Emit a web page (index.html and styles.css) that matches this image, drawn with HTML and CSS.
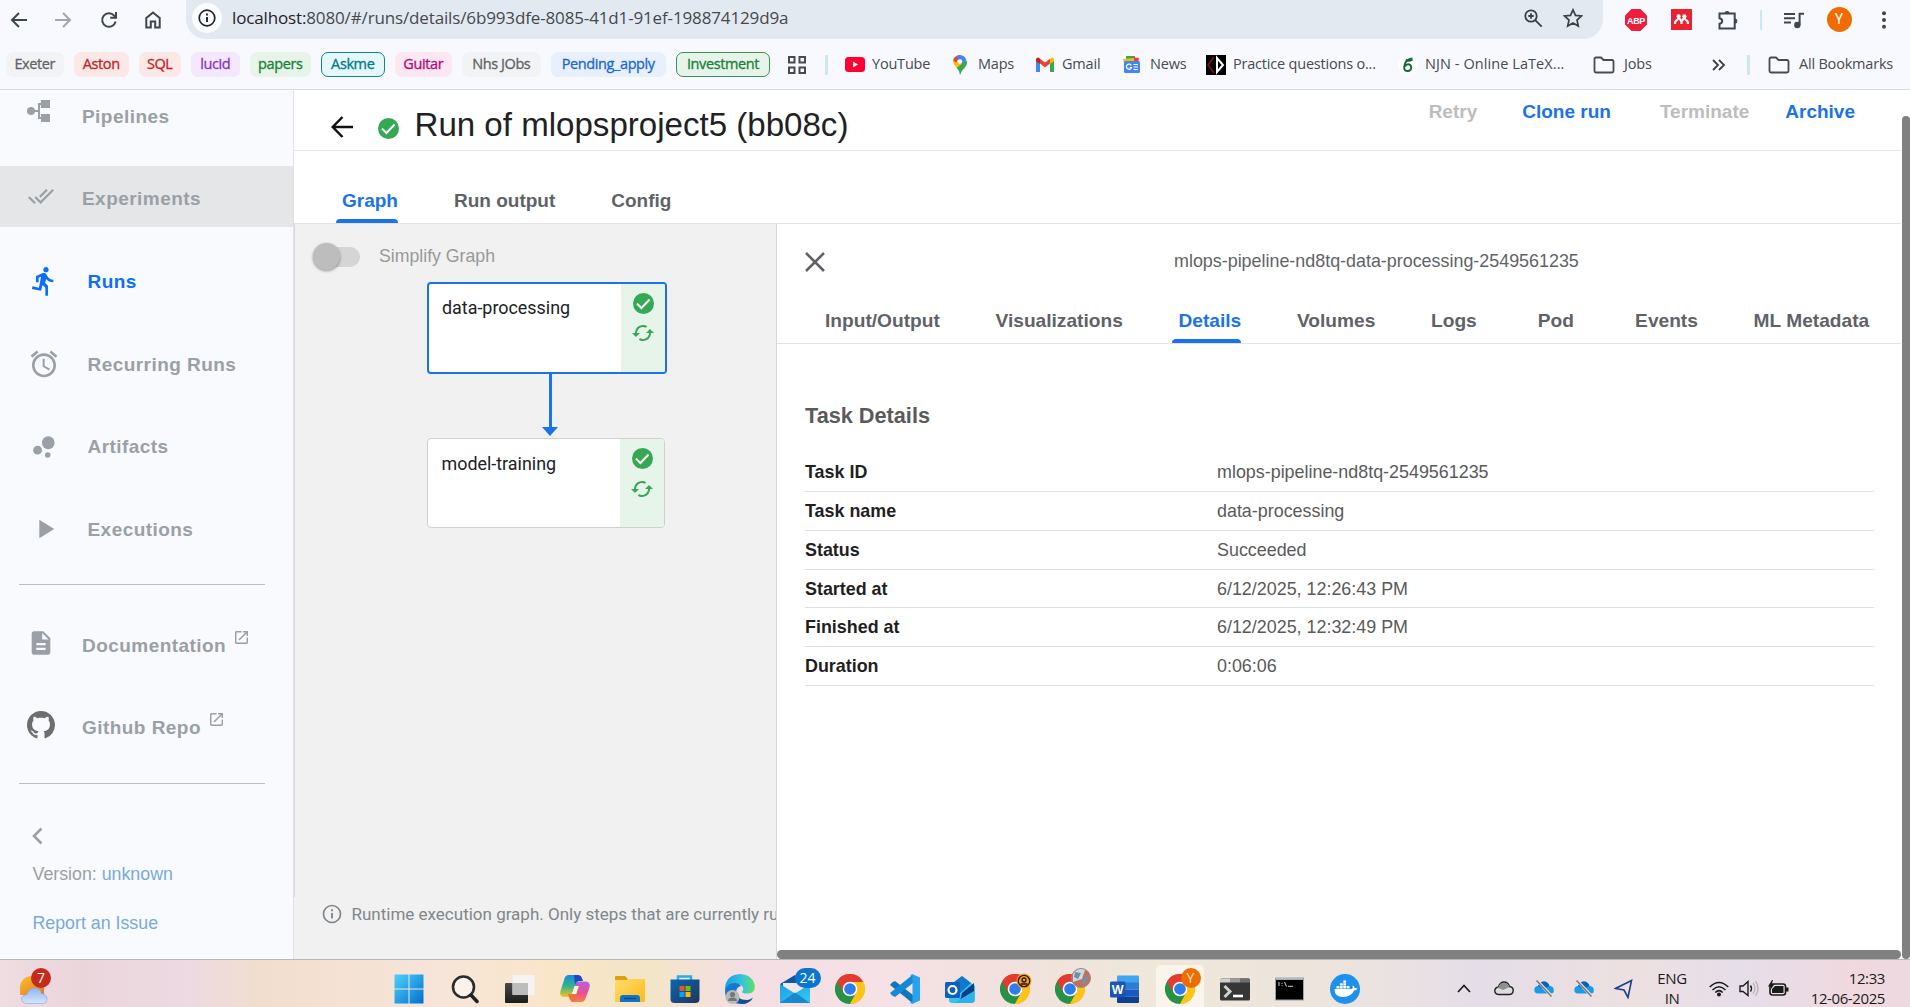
FILE: index.html
```html
<!DOCTYPE html>
<html lang="en">
<head>
<meta charset="utf-8">
<title>Run of mlopsproject5 (bb08c)</title>
<link rel="stylesheet" href="styles.css">
</head>
<body>
<svg class="defs" width="0" height="0" aria-hidden="true">
  <defs>
    <linearGradient id="win" x1="0" y1="0" x2="1" y2="1"><stop offset="0" stop-color="#4fd0fb"/><stop offset="1" stop-color="#0070d0"/></linearGradient>
    <linearGradient id="folderfill" x1="0" y1="0" x2="1" y2="1"><stop offset="0" stop-color="#ffdc73"/><stop offset="1" stop-color="#fcbb16"/></linearGradient>
    <linearGradient id="storefill" x1="0" y1="0" x2="1" y2="1"><stop offset="0" stop-color="#0c66b4"/><stop offset="1" stop-color="#20355c"/></linearGradient>
    <linearGradient id="edgetop" x1="0" y1="0" x2="1" y2="0"><stop offset="0" stop-color="#1b9de2"/><stop offset=".6" stop-color="#35c6dc"/><stop offset="1" stop-color="#62e05a"/></linearGradient>
    <linearGradient id="mailfill" x1="0" y1="0" x2="1" y2="1"><stop offset="0" stop-color="#1f9fe0"/><stop offset="1" stop-color="#35c9f5"/></linearGradient>
    <linearGradient id="cop1" x1="0" y1="0" x2="0" y2="1"><stop offset="0" stop-color="#1689e4"/><stop offset=".5" stop-color="#35b38a"/><stop offset="1" stop-color="#f2c81d"/></linearGradient>
    <linearGradient id="cop2" x1="0" y1="0" x2="0" y2="1"><stop offset="0" stop-color="#b262e8"/><stop offset=".6" stop-color="#ee4f8c"/><stop offset="1" stop-color="#f9804e"/></linearGradient>
    <linearGradient id="sun" x1="0" y1="0" x2="1" y2="1"><stop offset="0" stop-color="#f6c330"/><stop offset="1" stop-color="#f0701a"/></linearGradient>
    <linearGradient id="cloudfill" x1="0" y1="0" x2="0" y2="1"><stop offset="0" stop-color="#8fb6ec"/><stop offset="1" stop-color="#d6e6fb"/></linearGradient>
    <linearGradient id="dark" x1="0" y1="0" x2="0" y2="1"><stop offset="0" stop-color="#4a4a4a"/><stop offset="1" stop-color="#1c1c1c"/></linearGradient>
    <symbol id="check" viewBox="0 0 21 21"><circle cx="10.5" cy="10.5" r="10.5" fill="#34a853"/><path d="M4 10.6l4.4 4.4 8.200-8.500" fill="none" stroke="#fff" stroke-width="2"/></symbol>
    <symbol id="cached" viewBox="0 0 24 24"><path d="M19 8l-4 4h3c0 3.310-2.690 6-6 6-1.010 0-1.970-.25-2.800-.7l-1.460 1.460C8.970 19.540 10.430 20 12 20c4.420 0 8-3.580 8-8h3l-4-4zM6 12c0-3.310 2.690-6 6-6 1.010 0 1.970.25 2.800.7l1.460-1.460C15.030 4.460 13.570 4 12 4c-4.420 0-8 3.580-8 8H1l4 4 4-4H6z" fill="#34a853"/></symbol>
    <symbol id="launch" viewBox="3 3 18 18"><path d="M19 19H5V5h7V3H5c-1.110 0-2 .9-2 2v14c0 1.100.89 2 2 2h14c1.100 0 2-.9 2-2v-7h-2v7zM14 3v2h3.590l-9.830 9.830 1.410 1.410L19 6.410V10h2V3h-7z" fill="#9aa0a6"/></symbol>
    <symbol id="folder" viewBox="0 0 22 18"><path d="M1.500 3v12q0 1.500 1.500 1.500h16q1.500 0 1.500-1.500V5.500Q20.500 4 19 4H10.500L8 1.500H3Q1.500 1.500 1.500 3z" fill="none" stroke="#474a50" stroke-width="1.800"/></symbol>
    <symbol id="chrome" viewBox="0 0 30 30">
      <path d="M15 15L2 7.500A15 15 0 0 1 28 7.500z" fill="#e33b2e"/>
      <path d="M15 15V30A15 15 0 0 1 2 7.500z" fill="#259245"/>
      <path d="M15 15L28 7.500A15 15 0 0 1 15 30z" fill="#fcc419"/>
      <path d="M2 7.500L8.800 19 15 15V8H28A15 15 0 0 0 2 7.500z" fill="#e33b2e"/>
      <path d="M15 30l6.300-11.200L15 15 8.900 18.800z" fill="#259245"/>
      <path d="M21.300 18.800L15 30A15 15 0 0 0 28.300 8H15z" fill="#fcc419"/>
      <circle cx="15" cy="15" r="7.300" fill="#fff"/><circle cx="15" cy="15" r="5.800" fill="#2f7de9"/>
    </symbol>
    <symbol id="onedrive" viewBox="0 0 20 17"><path d="M4 13.500Q0 13 .3 9.500T4 6Q6 1.500 10 1.500T15.500 6Q19.500 6 19.800 10T16.500 13.500z" fill="#1a9be8"/><path d="M4 6Q6 1.500 10 1.500T15.500 6L9 9z" fill="#0c62b8"/><path d="M3 .5L18 16.500" stroke="#eadfe2" stroke-width="3"/><path d="M2.500 .5L17.500 16.500" stroke="#777" stroke-width="1.300"/></symbol>
  </defs>
</svg>

<header class="toolbar">
  <svg width="18" height="18" viewBox="0 0 18 18"><path d="M17 9H2M9 2L2 9l7 7" class="ln"/></svg>
  <svg width="18" height="18" viewBox="0 0 18 18"><path d="M1 9h15M9 2l7 7-7 7" class="ln muted"/></svg>
  <svg width="18" height="18" viewBox="0 0 18 18"><path d="M15.600 10.500A6.800 6.800 0 1 1 14.200 4.600L15.500 6M16 1v5.800h-5.800" class="ln"/></svg>
  <svg width="18" height="18" viewBox="0 0 18 18"><path d="M2.300 16.500V7L9 1.500 15.700 7v9.500h-4.500v-6H6.800v6z" class="ln"/></svg>
  <div class="omnibox">
    <span class="site-info"><svg width="18" height="18" viewBox="0 0 18 18"><circle cx="9" cy="9" r="7.800" fill="none" stroke="#1f2328" stroke-width="1.700"/><path d="M9 8v5M9 4.600v1.900" stroke="#1f2328" stroke-width="1.900"/></svg></span>
    <span class="url"><b>localhost:</b>8080/#/runs/details/6b993dfe-8085-41d1-91ef-198874129d9a</span>
    <svg width="19" height="19" viewBox="0 0 19 19"><circle cx="7" cy="7" r="5.700" fill="none" stroke="#3c4043" stroke-width="1.800"/><path d="M11.200 11.200l6.500 6.500M7 4.300v5.400M4.300 7h5.400" fill="none" stroke="#3c4043" stroke-width="1.800"/></svg>
    <svg width="20" height="20" viewBox="0 0 20 20"><path d="M10 1.800l2.500 5.600 6 .6-4.500 4.100 1.300 6-5.300-3.200-5.300 3.200 1.300-6L1.500 8l6-.6z" fill="none" stroke="#3c4043" stroke-width="1.700"/></svg>
  </div>
  <i></i>
  <svg width="22" height="22" viewBox="0 0 22 22"><path d="M6.500 0h9L22 6.500v9L15.500 22h-9L0 15.500v-9z" fill="#ee1c3d"/><text x="11" y="14.500" text-anchor="middle" class="abp">ABP</text></svg>
  <svg width="21" height="21" viewBox="0 0 21 21"><rect width="21" height="21" fill="#e92331"/><g fill="none" stroke="#fff" stroke-width="2.200"><path d="M4 15q0-3 1.500-3.500T7.500 8.500M10.500 15V12.500L7.500 8M10.500 12.500l3-4.500M17 15q0-3-1.500-3.500T13.500 8.500"/></g><circle cx="7.600" cy="7.300" r="2.100" fill="#fff"/><circle cx="13.400" cy="7.300" r="2.100" fill="#fff"/></svg>
  <svg width="22" height="22" viewBox="0 0 22 22"><path d="M2.500 4.500h15.200v15H2.500v-4.700q2.700-.6 2.700-2.800T2.500 9.200z" class="ln"/><path d="M7.500 4.500a2.600 2.600 0 0 1 5.200 0zM17.700 9.400a2.600 2.600 0 0 1 0 5.200z" fill="#3e4650"/></svg>
  <i class="sep"></i>
  <svg width="20" height="18" viewBox="0 0 20 18"><path d="M0 3h11M0 7.200h11M0 11.400h7" class="ln"/><path d="M15.600 14V2.800H20" class="ln"/><circle cx="13.300" cy="14" r="3.200" fill="#3e4650"/></svg>
  <span class="avatar">Y</span>
  <svg width="6" height="18" viewBox="0 0 6 18"><g fill="#3e4650"><circle cx="3" cy="2.300" r="2"/><circle cx="3" cy="9" r="2"/><circle cx="3" cy="15.700" r="2"/></g></svg>
</header>

<nav class="bookmarks">
  <span class="chip grey">Exeter</span>
  <span class="chip red">Aston</span>
  <span class="chip red">SQL</span>
  <span class="chip purple">lucid</span>
  <span class="chip green">papers</span>
  <span class="chip cyan">Askme</span>
  <span class="chip pink">Guitar</span>
  <span class="chip grey">Nhs JObs</span>
  <span class="chip blue">Pending_apply</span>
  <span class="chip green open">Investment</span>
  <span class="apps"><svg width="18" height="18" viewBox="0 0 18 18"><path d="M1 1h5.500v5.500H1zM11.500 1H17v5.500h-5.500zM1 11.500h5.500V17H1zM11.500 11.500H17V17h-5.500z" fill="none" stroke="#474a50" stroke-width="2"/></svg></span>
  <i class="sep wide"></i>
  <span class="mark"><svg width="20" height="15" viewBox="0 0 20 15"><rect width="20" height="15" rx="3.500" fill="#ff0033"/><path d="M8 4.500v6l5-3z" fill="#fff"/></svg><em>YouTube</em></span>
  <span class="mark m2"><svg width="14" height="20" viewBox="0 0 14 20"><path d="M7 20Q6.600 15.500 3.500 12.500L10 5l3.600.5Q15 9.500 11.500 13 8 16 7 20z" fill="#34a853"/><path d="M3.700 12.700Q-1.500 8 .8 3.500L5 7l4 2z" fill="#fbbc04"/><path d="M1.500 2.500Q4 -.5 8 .1L3 7.700.3 5.500Q.5 3.700 1.500 2.500z" fill="#ea4335"/><path d="M4 .8Q10.500-1.500 13.300 4.500L9.500 8.500 4.500 5z" fill="#4285f4"/><circle cx="7" cy="6.500" r="2.300" fill="#fff"/></svg><em>Maps</em></span>
  <span class="mark m3"><svg width="18" height="15" viewBox="0 0 18 15"><path d="M0 2v13h4V5z" fill="#4285f4"/><path d="M14 5v10h4V2z" fill="#34a853"/><path d="M14 2v5l4-3V2q-1.500-3-4 0z" fill="#fbbc04"/><path d="M4 1.800L9 5.600l5-3.800v4.800L9 10.500 4 6.600z" fill="#ea4335"/><path d="M0 2v2.200L4 7V1.800Q1.500-1 0 2z" fill="#c5221f"/></svg><em>Gmail</em></span>
  <span class="mark m4"><svg width="18" height="17" viewBox="0 0 18 17"><path d="M3 0h9v5H3z" fill="#34a853"/><path d="M9 1l7 1-1 5H8z" fill="#ea4335"/><path d="M0 3l11-1v5H1z" fill="#fbbc04"/><rect x="1" y="5" width="16" height="12" rx="1.500" fill="#4285f4"/><path d="M10.500 8.500H15M10.500 11H15M10.500 13.500H15M8.300 9.400A2.600 2.600 0 1 0 8.500 11.500H6.500" stroke="#fff" stroke-width="1.200" fill="none"/></svg><em>News</em></span>
  <span class="mark"><svg width="20" height="20" viewBox="0 0 20 20"><rect width="20" height="20" fill="#000"/><path d="M8 2L2 10l6 8" fill="none" stroke="#7d1414" stroke-width="1.500"/><path d="M11 3v14l6-7z" fill="none" stroke="#fff" stroke-width="2"/></svg><em>Practice questions o...</em></span>
  <span class="mark m6"><svg width="20" height="20" viewBox="0 0 20 20"><circle cx="10" cy="10" r="10" fill="#fff"/><path d="M14.500 3.500Q9 4 7 8.500 4.500 16 9.500 16q4-.2 3.700-3.700-.4-3-3-3-2 0-3 2M8 4.500q3 2.500 6.500 0" fill="none" stroke="#13693a" stroke-width="1.900"/></svg><em>NJN - Online LaTeX...</em></span>
  <span class="mark m7"><svg width="22" height="18"><use href="#folder"/></svg><em>Jobs</em></span>
  <span class="more"><svg width="13" height="12" viewBox="0 0 13 12"><path d="M1 1l5 5-5 5M7 1l5 5-5 5" fill="none" stroke="#3c4043" stroke-width="1.800"/></svg></span>
  <i class="sep wide"></i>
  <span class="mark m8"><svg width="22" height="18"><use href="#folder"/></svg><em>All Bookmarks</em></span>
</nav>

<main class="app">
  <aside class="side">
    <a class="item first"><svg width="23" height="23" viewBox="0 0 23 23"><g fill="#9aa0a6"><circle cx="4" cy="11" r="4"/><rect x="14" width="9" height="8"/><rect x="14" y="14" width="9" height="8"/><path d="M4 10h7V3h4v2h-2v12h2v2h-4v-7H4z"/></g></svg><span>Pipelines</span></a>
    <a class="item hover"><svg width="26" height="15" viewBox="0.400 5.600 23.200 13.400"><path d="M18 7l-1.410-1.410-6.340 6.340 1.410 1.410L18 7zm4.240-1.410L11.660 16.170 7.480 12l-1.410 1.410L11.660 19l12-12-1.420-1.410zM.41 13.410L6 19l1.410-1.410L1.830 12 .41 13.410z" fill="#9aa0a6"/></svg><span>Experiments</span></a>
    <a class="item tall active"><svg width="32" height="32" viewBox="0 0 24 24"><path d="M13.490 5.480c1.100 0 2-.9 2-2s-.9-2-2-2-2 .9-2 2 .9 2 2 2zm-3.600 13.900l1-4.400 2.100 2v6h2v-7.500l-2.100-2 .6-3c1.300 1.500 3.300 2.500 5.500 2.500v-2c-1.900 0-3.500-1-4.300-2.400l-1-1.600c-.4-.6-1-1-1.700-1-.3 0-.5.1-.8.1l-5.200 2.200v4.700h2v-3.400l1.800-.7-1.600 8.100-4.900-1-.4 2 7 1.400z" fill="#0d6efd"/></svg><span>Runs</span></a>
    <a class="item tall"><svg width="32" height="32" viewBox="0 0 24 24"><path d="M22 5.720l-4.600-3.860-1.290 1.530 4.600 3.860L22 5.720zM7.880 3.390L6.600 1.860 2 5.710l1.290 1.530 4.590-3.850zM12.500 8H11v6l4.750 2.850.75-1.230-4-2.370V8zM12 4c-4.970 0-9 4.030-9 9s4.020 9 9 9c4.970 0 9-4.030 9-9s-4.030-9-9-9zm0 16c-3.870 0-7-3.130-7-7s3.130-7 7-7 7 3.130 7 7-3.130 7-7 7z" fill="#9aa0a6"/></svg><span>Recurring Runs</span></a>
    <a class="item tall"><svg width="32" height="32" viewBox="0 0 24 24"><g fill="#9aa0a6"><circle cx="7.200" cy="14.400" r="3.300"/><circle cx="14.800" cy="18" r="2.100"/><circle cx="15.200" cy="8.800" r="4.800"/></g></svg><span>Artifacts</span></a>
    <a class="item tall"><svg width="32" height="32" viewBox="0 0 24 24"><path d="M8.500 5v14l11.200-7z" fill="#9aa0a6"/></svg><span>Executions</span></a>
    <hr>
    <a class="item tall ext"><svg width="28" height="28" viewBox="0 0 24 24"><path d="M14 2H6c-1.100 0-1.990.9-1.990 2L4 20c0 1.100.89 2 1.990 2H18c1.100 0 2-.9 2-2V8l-6-6zm2 16H8v-2h8v2zm0-4H8v-2h8v2zm-3-5V3.500L18.500 9H13z" fill="#9aa0a6"/></svg><span>Documentation</span><svg class="launch" width="13" height="13"><use href="#launch"/></svg></a>
    <a class="item tall ext"><svg width="28" height="28" viewBox="0 0 16 16"><path d="M8 0C3.580 0 0 3.580 0 8c0 3.540 2.290 6.530 5.470 7.590.4.07.55-.17.55-.38 0-.19-.01-.82-.01-1.490-2.010.37-2.530-.49-2.690-.94-.09-.23-.48-.94-.82-1.130-.28-.15-.68-.52-.01-.53.63-.01 1.080.58 1.230.82.72 1.210 1.870.87 2.330.66.07-.52.28-.87.51-1.070-1.780-.2-3.640-.89-3.640-3.950 0-.87.31-1.590.82-2.150-.08-.2-.36-1.020.08-2.120 0 0 .67-.21 2.200.82.64-.18 1.320-.27 2-.27s1.360.09 2 .27c1.530-1.040 2.200-.82 2.200-.82.44 1.100.16 1.920.08 2.120.51.56.82 1.270.82 2.150 0 3.070-1.870 3.750-3.650 3.950.29.25.54.73.54 1.480 0 1.070-.01 1.930-.01 2.200 0 .21.15.46.55.38A8.010 8.010 0 0 0 16 8c0-4.420-3.580-8-8-8z" fill="#6e6e6e"/></svg><span>Github Repo</span><svg class="launch" width="13" height="13"><use href="#launch"/></svg></a>
    <hr class="low">
    <svg class="collapse" width="11" height="18" viewBox="0 0 11 18"><path d="M9.500 1.500L2 9l7.500 7.500" fill="none" stroke="#9aa0a6" stroke-width="2.600"/></svg>
    <p class="meta">Version: <a>unknown</a></p>
    <p class="meta"><a>Report an Issue</a></p>
  </aside>

  <section class="page">
    <div class="head">
      <svg width="22" height="22" viewBox="0 0 22 22"><path d="M22 11H2M11.500 1L1.700 11l9.800 10" fill="none" stroke="#111" stroke-width="2.500"/></svg>
      <svg class="ok" width="21" height="21"><use href="#check"/></svg>
      <h1>Run of mlopsproject5 (bb08c)</h1>
      <div class="actions"><b class="off">Retry</b><b>Clone run</b><b class="off">Terminate</b><b>Archive</b></div>
    </div>
    <div class="tabs main-tabs"><b class="on">Graph</b><b>Run output</b><b>Config</b></div>
    <div class="body">
      <div class="graph">
        <div class="simplify"><span class="switch"></span>Simplify Graph</div>
        <div class="node selected"><span>data-processing</span><div class="state"><svg width="21" height="21"><use href="#check"/></svg><svg width="24" height="24"><use href="#cached"/></svg></div></div>
        <svg class="edge" width="16" height="62" viewBox="0 0 16 62"><path d="M8.500 0v56" stroke="#1a73e8" stroke-width="3"/><path d="M0 53h16L8 62z" fill="#1a73e8"/></svg>
        <div class="node second"><span>model-training</span><div class="state"><svg width="21" height="21"><use href="#check"/></svg><svg width="24" height="24"><use href="#cached"/></svg></div></div>
        <div class="note"><svg width="20" height="20" viewBox="0 0 20 20"><circle cx="10" cy="10" r="8.500" fill="none" stroke="#80868b" stroke-width="1.700"/><path d="M10 9v5.500M10 5.300v2" stroke="#80868b" stroke-width="1.900"/></svg><span>Runtime execution graph. Only steps that are currently ru</span></div>
      </div>
      <div class="panel">
        <div class="panel-head"><svg width="20" height="20" viewBox="0 0 20 20"><path d="M1 1l18 18M19 1L1 19" stroke="#5f6368" stroke-width="2.600"/></svg><span>mlops-pipeline-nd8tq-data-processing-2549561235</span></div>
        <div class="tabs side-tabs"><b>Input/Output</b><b>Visualizations</b><b class="on">Details</b><b>Volumes</b><b>Logs</b><b class="short">Pod</b><b>Events</b><b>ML Metadata</b></div>
        <div class="details">
          <h2>Task Details</h2>
          <dl>
            <div><dt>Task ID</dt><dd>mlops-pipeline-nd8tq-2549561235</dd></div>
            <div><dt>Task name</dt><dd>data-processing</dd></div>
            <div><dt>Status</dt><dd>Succeeded</dd></div>
            <div><dt>Started at</dt><dd>6/12/2025, 12:26:43 PM</dd></div>
            <div><dt>Finished at</dt><dd>6/12/2025, 12:32:49 PM</dd></div>
            <div><dt>Duration</dt><dd>0:06:06</dd></div>
          </dl>
        </div>
        <div class="hbar"></div>
      </div>
    </div>
  </section>
  <div class="vbar"></div>
</main>

<footer class="taskbar">
  <div class="weather"><svg width="30" height="30" viewBox="0 0 30 30"><path d="M1 20V12Q2 2 12 1h13v19z" fill="url(#sun)"/><path d="M8 28.500Q2.500 28 2.500 24T8 19.500q1.500-6.500 7.500-6.500t7 5.500q5.500.5 5.500 5.500T22 28.500z" fill="url(#cloudfill)" stroke="#7ea6e2" stroke-width=".6"/></svg><span class="badge seven">7</span></div>
  <div class="icons">
    <span class="start"><svg width="30" height="30" viewBox="0 0 30 30"><path d="M.5 .5h14v14H.5zM15.500 .5h14v14h-14zM.5 15.500h14v14H.5zM15.500 15.500h14v14h-14z" fill="url(#win)"/></svg></span>
    <span><svg width="28" height="30" viewBox="0 0 28 30"><circle cx="12.500" cy="13" r="10.500" fill="#fff" fill-opacity=".5" stroke="#2c2c2c" stroke-width="2.600"/><path d="M20 21l6 6.500" stroke="#222" stroke-width="3.500" stroke-linecap="round"/></svg></span>
    <span><svg width="30" height="30" viewBox="0 0 30 30"><rect y="9" width="23" height="20" rx="1" fill="url(#dark)"/><rect x="7.500" y="1" width="22" height="20" rx="1" fill="#f4f4f4" fill-opacity=".93"/><path d="M7.500 9H23v12H7.500z" fill="#bcbcbc"/></svg></span>
    <span><svg width="30" height="30" viewBox="0 0 30 30"><path d="M9 1h8q2.500 0 2 3l-4 14q-1 5-5 5H5q-6 0-4.500-6L4 6Q5 1 9 1z" fill="url(#cop1)"/><path d="M14 1h4.500q3 0 4.500 6h-4q-3 0-4 4z" fill="#1b49c8"/><path d="M21 28h-8q-2.500 0-2-3l4-13q1-4.500 5-4.500h5q6 0 4.500 6L26 23q-1 5-5 5z" fill="url(#cop2)"/><path d="M8 20h5l3-8h4l-4 11-3 5q-3 0-5-8z" fill="#f0713d"/><path d="M14.500 12h4.300l-2.600 8h-4.300z" fill="#fff6ec"/></svg></span>
    <span><svg width="30" height="30" viewBox="0 0 30 30"><path d="M0 3q0-1 1-1h9l3 3h16q1 0 1 1v6H0z" fill="#dfa00c"/><path d="M0 6h11l2-1h16q1 0 1 1v21q0 1-1 1H1q-1 0-1-1z" fill="url(#folderfill)"/><path d="M5 28v-4q0-3 3-3h14q3 0 3 3v4z" fill="#1373c6"/><path d="M9 24.500h12" stroke="#0a4b92" stroke-width="1.400"/></svg></span>
    <span><svg width="30" height="30" viewBox="0 0 30 30"><path d="M8 7V2.500h13V7" fill="none" stroke="#1fb0ee" stroke-width="2.400"/><path d="M.5 5.500h29V25q0 4-4 4h-21q-4 0-4-4z" fill="url(#storefill)"/><path d="M9.500 12h5v5h-5z" fill="#f25022"/><path d="M15.500 12h5v5h-5z" fill="#7fba00"/><path d="M9.500 18h5v5h-5z" fill="#00a4ef"/><path d="M15.500 18h5v5h-5z" fill="#ffb900"/></svg></span>
    <span><svg width="30" height="30" viewBox="0 0 30 30"><path d="M15 0Q26 0 29.500 10q1.500 9-6.500 9.500-5 0-6-1.500 2.500-3 0-6-4-4-10-1Q2 13 0 17-.5 1 15 0z" fill="url(#edgetop)"/><path d="M0 17Q2 9 10 9q4 0 6 3-5 1-5 7 1 7 9 8 4 0 8-4-4 7-13 7Q0 29 0 17z" fill="#1378cf"/><path d="M12 17q-1 9 10 9 3 0 6-2-4 6-11 6-6-1-7-6z" fill="#124f95"/><circle cx="7.500" cy="23" r="7" fill="#b9b9b9"/><circle cx="7.500" cy="20.500" r="2.600" fill="#777"/><path d="M3 27q0-3.500 4.500-3.500T12 27z" fill="#777"/></svg></span>
    <span><svg width="30" height="30" viewBox="0 0 30 30"><path d="M0 10L15 1l15 9-15 12z" fill="#0f57a4"/><path d="M3 9h24v5l-12 9L3 14z" fill="#f1e7e7"/><path d="M0 10l15 9.500L30 10v19H0z" fill="url(#mailfill)"/><path d="M0 29L15 18.500 30 29z" fill="#1689d2"/></svg><b class="badge mailcount">24</b></span>
    <span><svg width="30" height="30"><use href="#chrome"/></svg></span>
    <span><svg width="30" height="30" viewBox="0 0 30 30"><path d="M2 8.500L5 7l18 14v8.500L0 11z" fill="#1177bd"/><path d="M2 21.500L5 23 23 9V.5L0 19z" fill="#158ad6"/><path d="M22 0l8 3.500v23L22 30l-2-1.500 2.500-1V2L20 1.500z" fill="#28a3ef"/></svg></span>
    <span><svg width="30" height="30" viewBox="0 0 30 30"><path d="M4 12L17 2l13 10v14q0 3-3 3H7q-3 0-3-3z" fill="#35c4ee"/><path d="M4 12L17 2l9 7-13 12z" fill="#1278cf"/><path d="M17 19L29 9v9l-14 9z" fill="#0b3f84"/><path d="M9 29l20-12v9q0 3-3 3z" fill="#2bb2ea"/><rect y="8" width="15" height="16" rx="1.500" fill="#0d5fc0"/><circle cx="7.500" cy="16" r="4" fill="none" stroke="#fff" stroke-width="2.200"/></svg></span>
    <span><svg width="30" height="30"><use href="#chrome"/></svg><svg class="corner" width="16" height="16" viewBox="0 0 16 16"><circle cx="8" cy="8" r="7.500" fill="#f5a12c"/><circle cx="8" cy="8" r="5.700" fill="none" stroke="#2b1a05" stroke-width="1.300"/><circle cx="8" cy="7" r="2" fill="none" stroke="#2b1a05" stroke-width="1.300"/><path d="M4.500 11h7" stroke="#2b1a05" stroke-width="1.500"/></svg></span>
    <span><svg width="30" height="30"><use href="#chrome"/></svg><svg class="corner big" width="20" height="20" viewBox="0 0 20 20"><circle cx="10" cy="10" r="9.500" fill="#c2705a" stroke="#8b8d92"/><path d="M2 6q5-7 12-4l-3 9-9 3z" fill="#ccd8e2"/><path d="M4 4l6 1-3 6-4-2zM12 10l5-2-2 7-4 1z" fill="#6f91a8"/></svg></span>
    <span><svg width="30" height="30" viewBox="0 0 30 30"><path d="M8 1.500h20q1 0 1 1V9H7V2.500q0-1 1-1z" fill="#41a5ee"/><path d="M7 8.500h22v7H7z" fill="#2b7cd3"/><path d="M7 15.500h22v7H7z" fill="#185abd"/><path d="M7 22.500h22V28q0 1-1 1H8q-1 0-1-1z" fill="#103f91"/><rect y="7.500" width="15.500" height="16" rx="1.500" fill="#1755b8"/><text x="7.700" y="20" text-anchor="middle" class="word">W</text></svg></span>
    <span class="current"><svg width="30" height="30"><use href="#chrome"/></svg><b class="badge y">Y</b></span>
    <span><svg width="30" height="30" viewBox="0 0 30 30"><rect y="4.500" width="30" height="22" rx="1.500" fill="#363636"/><path d="M0 8.500V6q0-1.500 1.500-1.500H10v4z" fill="#d0d0d0"/><path d="M10 4.500h10v4H10z" fill="#9a9a9a"/><path d="M20 4.500h8.500Q30 4.500 30 6v2.500H20z" fill="#6d6d6d"/><path d="M4.500 12l5.500 5.500-5.500 5.500" fill="none" stroke="#cfcfcf" stroke-width="3"/><path d="M13 22h10" stroke="#fff" stroke-width="2.600"/></svg></span>
    <span><svg width="30" height="30" viewBox="0 0 30 30"><rect x=".5" y="4" width="28" height="22" fill="#000" stroke="#9aa4ac"/><path d="M1 5h27" stroke="#cfd6db" stroke-width="1.600"/><path d="M4 8v4M7 9v.8M7 11v.8M9.500 8l2 4.500M13 12.300h5" stroke="#ccc" stroke-width="1"/></svg></span>
    <span><svg width="30" height="30" viewBox="0 0 30 30"><circle cx="15" cy="15" r="15" fill="#1d91ee"/><path d="M4.500 15h17.200q1.500-1 .8-3.500 2 .8 2.300 2.500 1.700-.3 2.700.5-1 2-3.500 2Q21.500 23 13 23t-8.500-8z" fill="#fff"/><path d="M6.500 12h2.800v2.500H6.500zM9.900 12h2.800v2.500H9.900zM13.300 12h2.800v2.500h-2.800zM16.700 12h2.800v2.500h-2.800zM9.900 9.200h2.800v2.300H9.900zM13.300 9.200h2.800v2.300h-2.800zM13.300 6.500h2.800v2.200h-2.800z" fill="#fff"/></svg></span>
  </div>
  <div class="tray">
    <svg width="14" height="9" viewBox="0 0 14 9"><path d="M1 8l6-6.500L13 8" fill="none" stroke="#1b1b1b" stroke-width="1.700"/></svg>
    <svg width="20" height="15" viewBox="0 0 20 15"><path d="M4.500 13.500Q.8 13 .8 9.800T4.500 6Q6 1 10 1t5.500 4.500q3.700.5 3.700 4T15.500 13.500z" fill="#ddd" stroke="#222" stroke-width="1.400"/><path d="M3 6.500L9 9l6.500-3Q14 1.800 10 1.800T4.500 6z" fill="#8f8f8f"/></svg>
    <svg width="20" height="17"><use href="#onedrive"/></svg>
    <svg width="20" height="17"><use href="#onedrive"/></svg>
    <svg width="19" height="20" viewBox="0 0 19 20"><path d="M17.500 1.500L1.500 9.500l8.500 1.500 4 7.500z" fill="none" stroke="#1d3f8f" stroke-width="1.600"/></svg>
    <span class="two">ENG<br>IN</span>
    <svg width="20" height="16" viewBox="0 0 20 16"><g fill="none" stroke="#1b1b1b" stroke-width="1.500"><path d="M.7 6Q10-3 19.300 6M3.500 9Q10 2.300 16.500 9M6.300 11.500Q10 7.800 13.700 11.500"/></g><circle cx="10" cy="13.500" r="2" fill="#1b1b1b"/></svg>
    <svg width="20" height="17" viewBox="0 0 20 17"><path d="M1 6h3l5-4.500v14L4 11.500H1z" fill="none" stroke="#1b1b1b" stroke-width="1.400"/><path d="M11.500 5.500q2 3 0 6" fill="none" stroke="#1b1b1b" stroke-width="1.400"/><path d="M14 3q4 5.500 0 11M16.500 1q5 7.500 0 15" fill="none" stroke="#b4adb2" stroke-width="1.200"/></svg>
    <svg width="21" height="17" viewBox="0 0 21 17"><rect x="2" y="4" width="15.500" height="11" rx="2.500" fill="#eee0e5" stroke="#1b1b1b" stroke-width="1.600"/><path d="M4 13V9l3-3h8.500v7zM18 7.500h2.500v4H18zM4 0L0 6.500h3L2 10.500 6.500 4H3.700L5 0z" fill="#1b1b1b"/></svg>
    <span class="two clock">12:33<br>12-06-2025</span>
  </div>
</footer>
</body>
</html>
```

FILE: styles.css
```css
* { box-sizing: border-box; }
body {
  margin: 0; width: 1910px; height: 1007px; overflow: hidden;
  display: flex; flex-direction: column;
  font-family: "Liberation Sans", Arial, sans-serif; color: #5f6368; background: #fff;
}
.defs { position: absolute; }
svg { display: block; flex: none; }
.ln { fill: none; stroke: #3e4650; stroke-width: 2; }
.ln.muted { stroke: #a3a6ac; }

/* browser toolbar */
.toolbar {
  height: 39px; background: #f8f9fe; display: grid; align-items: center; justify-items: center;
  grid-template-columns: 38px 50px 42px 46px 10px 1417px 10px 46px 45px 47px 20px 46px 44px 46px;
  padding-bottom: 3px;
}
.toolbar .omnibox { grid-column: 6; }
.omnibox {
  width: 1417px; height: 39px; align-self: start; background: #e3e9f1; border-radius: 0 0 20px 20px;
  display: flex; align-items: center; padding: 0 20px 3px 6px;
}
.site-info { width: 30px; height: 30px; margin-right: 10px; border-radius: 50%; background: #fbfcff; display: flex; align-items: center; justify-content: center; }
.url { flex: 1; font: 17px/24px "Open Sans", "Noto Sans", sans-serif; letter-spacing: -0.140px; color: #45494f; white-space: nowrap; }
.url b { font-weight: 400; color: #1f2328; }
.omnibox > svg + svg { margin-left: 20px; }
.sep { width: 2px; height: 20px; background: #cfe3fb; border-radius: 1px; }
.sep.wide { width: 3px; height: 20px; }
.avatar { width: 25px; height: 25px; border-radius: 50%; background: #f06c00; color: #fff; font: 14px/25px Roboto, sans-serif; text-align: center; }
.abp { font: bold 9px "Liberation Sans", sans-serif; fill: #fff; letter-spacing: -.3px; }

/* bookmarks bar */
.bookmarks {
  height: 51px; padding: 13px 0 0 6px; background: #f8f9fe; border-bottom: 1px solid #dadce5;
  display: grid; align-items: center; align-content: start; grid-auto-rows: 25px;
  grid-template-columns: 68px 65px 52px 59px 71px 74px 67px 89px 125px 112px 37px 20px 108px 83px 87px 83px 192px 195px 119px 35px 21px auto;
  font: 14.500px/20px "Open Sans", "Noto Sans", sans-serif; letter-spacing: -.2px; color: #474a50; white-space: nowrap;
}
.bookmarks em { font-style: normal; margin-top: -2px; }
.chip { height: 25px; border-radius: 7px; line-height: 23px; text-align: center; font-weight: 500; letter-spacing: -.4px; margin-right: 10.500px; }
.chip.grey { background: #f1f3f4; color: #5f6368; }
.chip.red { background: #fce8e6; color: #c5221f; }
.chip.purple { background: #f3e8fd; color: #8430ce; }
.chip.green { background: #e6f4ea; color: #188038; }
.chip.cyan { background: #e4f7fb; color: #007b83; border: 1.500px solid #12858c; line-height: 21px; }
.chip.pink { background: #fde7f3; color: #b80672; }
.chip.blue { background: #e8f0fe; color: #1967d2; }
.chip.open { border: 1.500px solid #3d8f58; line-height: 21px; margin-right: 18px; }
.chip { -webkit-text-stroke: .3px currentColor; }
.mark { display: flex; align-items: center; gap: 7px; }
.m2 { gap: 11px; }
.m3 { gap: 8px; }
.m4, .m7, .m8 { gap: 9px; }
.m6 { letter-spacing: .08px; }

/* application frame */
.app { height: 869px; display: grid; grid-template-columns: 294px 1fr 9px; }
.side { background: #f8fafd; border-right: 1px solid #e0e2e6; }
.item { display: flex; align-items: center; padding-left: 27px; font-size: 19px; font-weight: 700; letter-spacing: .45px; color: #9aa0a6; }
.item span { padding-top: 1px; }
.item > svg:first-child { margin-right: 32px; }
.item.first { height: 76px; padding-bottom: 24px; }
.item.first > svg { margin-bottom: 10px; }
.item.hover { height: 61px; padding-left: 28px; background: #e5e6e8; margin-bottom: 13px; }
.item.hover > svg:first-child { margin-right: 28px; }
.item.hover span { padding-top: 5px; }
.item.tall { height: 82.700px; padding-left: 27.500px; }
.item.tall > svg:first-child { margin-right: 28px; }
.item.active { color: #0d6efd; }
.side hr { height: 1px; margin: 13px 28px 0 19px; border: 0; background: #babdc1; }
.side hr + .ext { margin-top: 19px; }
.item.ext { padding-left: 27px; }
.item.ext > svg:first-child { margin: -5px 27px 0 0; }
.item .launch { margin: -16px 0 0 9px; }
.side .low { margin-top: 14px; }
.collapse { margin: 43px 0 0 32px; }
.meta { margin: 18px 0 0 32.500px; font-size: 17.800px; line-height: 22px; color: #9aa0a6; }
.meta + .meta { margin-top: 27px; }
.meta a { color: #78a9dd; }

.page { display: flex; flex-direction: column; min-width: 0; }
.head { height: 61px; display: flex; border-bottom: 1px solid #e8eaed; padding: 26px 46px 0 37px; }
.head .ok { margin: 2px 0 0 24.500px; }
.head h1 { flex: 1; margin: -9px 0 0 16px; font-weight: 400; font-size: 33.100px; line-height: 36px; color: #202124; }
.actions { display: flex; margin-top: -15px; font-size: 19px; line-height: 22px; color: #1a73e8; }
.actions b + b { margin-left: 45px; }
.actions b:nth-child(3) { margin-left: 49px; }
.actions b:nth-child(4) { margin-left: 36px; }
.actions .off { color: #bdbdbd; }

.tabs { display: flex; font-size: 19px; color: #5f6368; border-bottom: 1px solid #e3e3e3; }
.tabs b { position: relative; }
.tabs .on { color: #1a73e8; }
.tabs .on::after { content: ""; position: absolute; left: -6px; right: 0; bottom: 0; height: 4px; background: #1a73e8; border-radius: 4px 4px 0 0; }
.main-tabs { height: 73px; padding-left: 48px; gap: 56px; line-height: 100px; }
.main-tabs b { height: 72px; }
.body { flex: 1; display: grid; grid-template-columns: 483px 1fr; min-height: 0; }

/* graph canvas */
.graph { position: relative; overflow: hidden; background: #f1f1f1; border-right: 1px solid #d8d8d8; }
.graph::before { content: ""; position: absolute; left: 0; top: 0; width: 1px; height: 673px; background: #dadada; }
.simplify { display: flex; align-items: center; height: 30px; margin: 17px 0 0 22px; font-size: 17.700px; color: #999; }
.switch { position: relative; width: 44px; height: 20px; margin: 2px 19px 0 0; border-radius: 10px; background: #d5d5d5; }
.switch::before { content: ""; position: absolute; left: -3px; top: -4px; width: 27px; height: 27px; border-radius: 50%; background: #bdbdbd; box-shadow: 0 1px 3px rgba(0,0,0,.4); }
.node { position: absolute; left: 133px; display: flex; justify-content: space-between; background: #fff; border-radius: 4px; overflow: hidden; font: 17.900px/22px Roboto, sans-serif; color: #202124; }
.node.selected { top: 58px; width: 240px; height: 92px; border: 2px solid #1a73e8; }
.node.second { top: 214px; width: 238px; height: 90px; border: 1px solid #d0d0d0; }
.node > span { margin: 13px 0 0 13px; }
.node.second > span { margin: 14px 0 0 13.500px; }
.state { width: 44px; background: #e6f4ea; display: flex; flex-direction: column; align-items: center; padding-top: 9px; gap: 7px; }
.second .state { gap: 8px; }
.edge { position: absolute; left: 248px; top: 150px; }
.note { position: absolute; left: 28px; bottom: 33px; display: flex; align-items: center; gap: 9.500px; font: 17px/24px Roboto, sans-serif; color: #80868b; white-space: nowrap; }

/* task panel */
.panel { display: flex; flex-direction: column; min-width: 0; background: #fff; }
.panel-head { height: 75px; display: flex; align-items: center; padding-left: 27.500px; font-size: 17.900px; color: #5f6368; }
.panel-head span { margin-left: 349.500px; }
.side-tabs { height: 45px; padding-left: 48px; gap: 55.700px; font-size: 19.150px; line-height: 43px; white-space: nowrap; }
.side-tabs b { height: 44px; }
.side-tabs .short { min-width: 47px; text-align: center; }
.details { flex: 1; padding: 59px 27px 0 28px; }
.details h2 { margin: 0 0 24px; font-size: 21.700px; line-height: 26px; color: #5a5a5a; }
dl { margin: 0; font-size: 17.900px; }
dl div { display: grid; grid-template-columns: 412px 1fr; height: 38.850px; line-height: 38px; border-bottom: 1px solid #dedfe0; }
dt { font-weight: 700; color: #1f1f1f; }
dd { margin: 0; color: #5a5a5a; }
.hbar { height: 9px; border-radius: 5px; background: #808080; }
.vbar { margin: 26px 0 0 1px; background: #808080; border-radius: 4px; }

/* taskbar */
.taskbar {
  height: 48px; border-top: 1px solid #bdb5b5; display: flex;
  background: linear-gradient(90deg, #efdde2 0, #ead5db 80px, #eddae2 190px, #f1dece 260px, #f7e5da 440px, #f9e6c8 560px, #f3e5c8 650px, #f3dfe3 740px, #f6e2e6 880px, #f2e1de 1000px, #efe8da 1150px, #ede4dd 1330px, #e5dee8 1480px, #ece0e0 1630px, #e6deea 1740px, #f0d9df 1850px, #edd9e0 1910px);
}
.weather { position: relative; width: 382.500px; padding: 15px 0 0 19px; }
.badge { position: absolute; color: #fff; font: 14px/20px "Open Sans", sans-serif; text-align: center; border-radius: 10px; height: 20px; }
.seven { left: 31px; top: 8px; width: 20px; background: #c42b1c; }
.icons { display: grid; grid-template-columns: repeat(18, 55px); }
.icons span { position: relative; display: flex; justify-content: center; align-items: flex-start; padding-top: 14px; }
.icons .start { margin: 0 1.500px 0 -1.500px; }
.mailcount { left: 27px; top: 8px; width: 26px; background: #0b76d1; font-weight: 400; }
.corner { position: absolute; left: 28px; top: 13px; }
.corner.big { left: 28px; top: 8px; }
.icons .current { margin-left: 3px; width: 48px; margin-top: 5px; padding-top: 9px; background: #f9f4ec; border-radius: 5px 5px 0 0; }
.badge.y { left: 25px; top: 3px; width: 20px; background: #ef6c00; color: #fbe0c8; }
.word { font: bold 12.500px "Liberation Sans", sans-serif; fill: #fff; }
.tray {
  flex: 1; margin-left: 71.500px; display: grid; align-items: center; align-content: start; justify-items: center; padding-top: 9px;
  grid-template-columns: 40px 40px 40px 40px 39px 58px 35px 25px 35px auto; justify-content: start;
  font: 15px/19.500px "Open Sans", sans-serif; letter-spacing: -.4px; color: #1b1b1b;
}
.two { text-align: center; }
.two.clock { width: 89px; text-align: right; }
```
